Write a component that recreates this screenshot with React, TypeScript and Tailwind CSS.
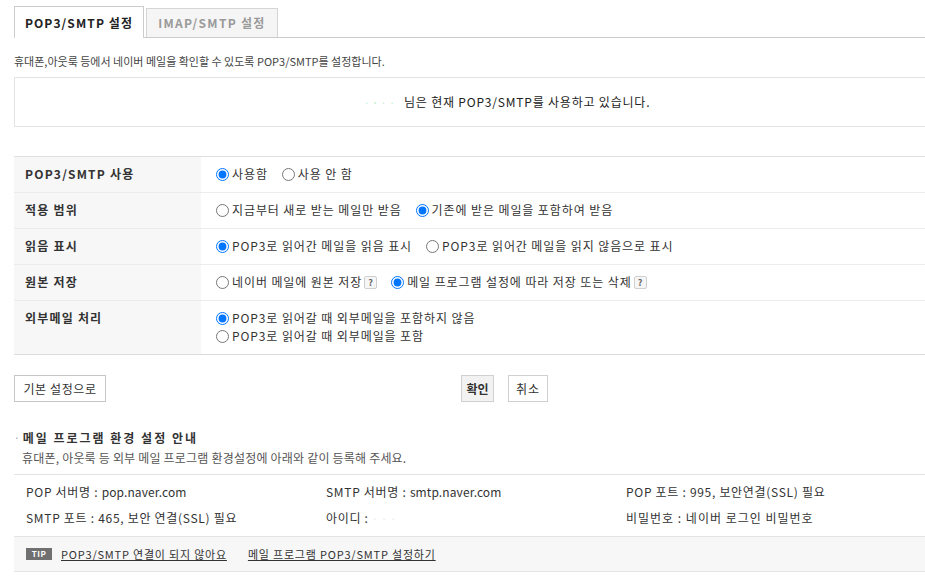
import React from "react";

const Radio = ({ name, checked, children }: { name: string; checked?: boolean; children: React.ReactNode }) => (
  <label className="flex items-center gap-[3px] whitespace-nowrap">
    <input type="radio" name={name} defaultChecked={checked} className="m-0 w-[13px] h-[13px] shrink-0" />
    <span>{children}</span>
  </label>
);

const Help = () => (
  <span className="ml-[2px] inline-flex w-[13px] h-[13px] items-center justify-center border border-[#cfcfcf] bg-[#f6f6f6] rounded-[2px] text-[9px] font-bold text-[#666] leading-none tracking-normal">
    ?
  </span>
);

const Row = ({ label, h, children, last }: { label: string; h: string; children: React.ReactNode; last?: boolean }) => (
  <div className={`flex ${h} ${last ? "border-b border-[#dcdcdc]" : "border-b border-[#ececec]"}`}>
    <div className="w-[187px] shrink-0 bg-[#f7f7f7] pl-[11px] pt-[8px] leading-[18px] font-bold text-[12px] text-[#333] tracking-[1.2px]">
      {label}
    </div>
    <div className="flex-1 pl-[15px] pt-[8px] leading-[18px] text-[12px] text-[#333] tracking-[0.9px]">{children}</div>
  </div>
);

export default function App() {
  return (
    <div className="w-[925px] h-[580px] overflow-hidden bg-white font-['Noto_Sans_CJK_KR',sans-serif] text-[#333]">
      <div className="pl-[14px] pt-[6px]">
        {/* Tabs */}
        <div className="flex items-end h-[32px] border-b border-[#cccccc]">
          <div className="w-[130px] h-[32px] -mb-px bg-white border border-b-0 border-[#cccccc] flex items-center justify-center text-[12px] font-bold text-[#222] tracking-[1.1px]">
            POP3/SMTP 설정
          </div>
          <div className="ml-[2px] w-[132px] h-[29px] bg-[#f5f5f5] border border-b-0 border-[#d5d5d5] flex items-center justify-center text-[12px] font-bold text-[#9a9a9a] tracking-[1.3px]">
            IMAP/SMTP 설정
          </div>
        </div>

        {/* description */}
        <div className="mt-[15px] h-[16px] leading-[16px] text-[11px] text-[#444]">
          휴대폰,아웃룩 등에서 네이버 메일을 확인할 수 있도록 POP3/SMTP를 설정합니다.
        </div>

        {/* info box */}
        <div className="mt-[8px] h-[50px] border border-r-0 border-[#e3e3e3] flex items-center pl-[349px] text-[12px] text-[#222] tracking-[0.8px]">
          <span className="w-[40px] text-[#c8efd4] text-[10px] tracking-[3px]">·˙··</span>
          님은 현재 POP3/SMTP를 사용하고 있습니다.
        </div>

        {/* table */}
        <div className="mt-[29px] border-t border-[#e0e0e0]">
          <Row label="POP3/SMTP 사용" h="h-[36px]">
            <div className="flex items-center gap-[14px]">
              <Radio name="use" checked>사용함</Radio>
              <Radio name="use">사용 안 함</Radio>
            </div>
          </Row>
          <Row label="적용 범위" h="h-[36px]">
            <div className="flex items-center gap-[14px]">
              <Radio name="range">지금부터 새로 받는 메일만 받음</Radio>
              <Radio name="range" checked>기존에 받은 메일을 포함하여 받음</Radio>
            </div>
          </Row>
          <Row label="읽음 표시" h="h-[36px]">
            <div className="flex items-center gap-[14px]">
              <Radio name="read" checked>POP3로 읽어간 메일을 읽음 표시</Radio>
              <Radio name="read">POP3로 읽어간 메일을 읽지 않음으로 표시</Radio>
            </div>
          </Row>
          <Row label="원본 저장" h="h-[36px]">
            <div className="flex items-center gap-[14px]">
              <div className="flex items-center">
                <Radio name="orig">네이버 메일에 원본 저장</Radio>
                <Help />
              </div>
              <div className="flex items-center">
                <Radio name="orig" checked>메일 프로그램 설정에 따라 저장 또는 삭제</Radio>
                <Help />
              </div>
            </div>
          </Row>
          <Row label="외부메일 처리" h="h-[54px]" last>
            <div className="flex flex-col">
              <Radio name="ext" checked>POP3로 읽어갈 때 외부메일을 포함하지 않음</Radio>
              <Radio name="ext">POP3로 읽어갈 때 외부메일을 포함</Radio>
            </div>
          </Row>
        </div>

        {/* buttons */}
        <div className="mt-[20px] flex items-center">
          <button className="w-[92px] h-[27px] border border-[#c6c6c6] bg-white text-[12px] text-[#333] tracking-[0.6px]">기본 설정으로</button>
          <button className="ml-[355px] w-[33px] h-[27px] border border-[#d0d0d0] bg-[#f2f2f2] text-[12px] font-bold text-[#333]">확인</button>
          <button className="ml-[14px] w-[40px] h-[27px] border border-[#d0d0d0] bg-white text-[12px] text-[#333] tracking-[1px]">취소</button>
        </div>

        {/* guide */}
        <div className="mt-[28px] h-[16px] leading-[16px] text-[12px] font-bold text-[#333] flex items-center tracking-[2px]">
          <span className="text-[#999] font-normal mr-[3px] text-[10px] tracking-normal">·</span>
          메일 프로그램 환경 설정 안내
        </div>
        <div className="mt-[4px] h-[16px] leading-[16px] pl-[8px] text-[12px] text-[#555] tracking-[0.2px]">
          휴대폰, 아웃룩 등 외부 메일 프로그램 환경설정에 아래와 같이 등록해 주세요.
        </div>

        <div className="mt-[8px] border-t border-[#e3e3e3] pt-[4px] pb-[4px] pl-[12px] grid grid-cols-[300px_300px_1fr] text-[12px] text-[#333] leading-[26px] tracking-[0.7px]">
          <div>
            POP 서버명 : <span className="tracking-[0.1px]">pop.naver.com</span>
          </div>
          <div>
            SMTP 서버명 : <span className="tracking-[0.1px]">smtp.naver.com</span>
          </div>
          <div>POP 포트 : 995, 보안연결(SSL) 필요</div>
          <div>SMTP 포트 : 465, 보안 연결(SSL) 필요</div>
          <div>
            아이디 : <span className="text-[#e6e6e6] text-[10px]">· · ·</span>
          </div>
          <div className="tracking-[1px]">비밀번호 : 네이버 로그인 비밀번호</div>
        </div>

        <div className="h-[36px] border-t border-b border-[#e3e3e3] bg-[#f7f7f7] flex items-center pl-[12px] text-[11px] text-[#333] tracking-[0.8px]">
          <span className="w-[26px] h-[12px] bg-[#707070] text-white text-[8px] font-bold flex items-center justify-center leading-none tracking-[0.5px]">
            TIP
          </span>
          <a className="ml-[9px] underline">POP3/SMTP 연결이 되지 않아요</a>
          <a className="ml-[21px] underline">메일 프로그램 POP3/SMTP 설정하기</a>
        </div>
      </div>
    </div>
  );
}
